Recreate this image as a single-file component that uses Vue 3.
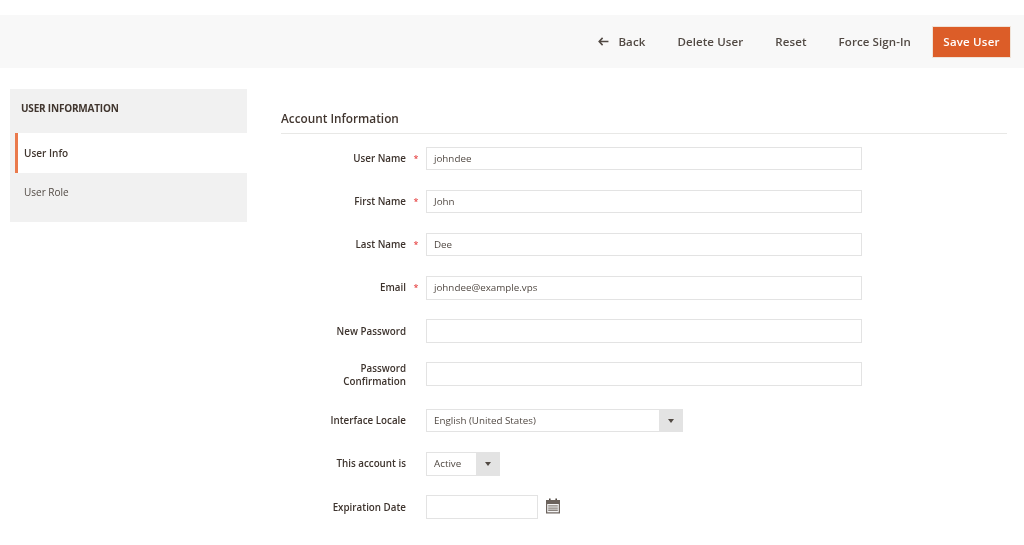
<script setup>
const fields = [
  { label: 'User Name', value: 'johndee', required: true },
  { label: 'First Name', value: 'John', required: true },
  { label: 'Last Name', value: 'Dee', required: true },
  { label: 'Email', value: 'johndee@example.vps', required: true },
  { label: 'New Password', value: '' },
  { label: 'Password Confirmation', value: '', tall: true },
]
</script>

<template>
  <div class="page">
    <header class="actions">
      <a class="action back">
        <svg viewBox="0 0 12 10" width="11" height="9"><path d="M5 1L1.2 5 5 9M1.5 5H11.5" fill="none" stroke="currentColor" stroke-width="1.7"/></svg>
        <span>Back</span>
      </a>
      <a class="action">Delete User</a>
      <a class="action">Reset</a>
      <a class="action">Force Sign-In</a>
      <button class="save">Save User</button>
    </header>

    <div class="content">
      <aside class="side">
        <div class="side-title">USER INFORMATION</div>
        <div class="tab active">User Info</div>
        <div class="tab">User Role</div>
      </aside>

      <main class="main">
        <h2 class="legend">Account Information</h2>

        <div v-for="f in fields" :key="f.label" class="row" :class="{ tall: f.tall }">
          <label class="label">{{ f.label }}</label>
          <span class="mark">{{ f.required ? '*' : '' }}</span>
          <div class="input wide">{{ f.value }}</div>
        </div>

        <div class="row">
          <label class="label">Interface Locale</label>
          <span class="mark"></span>
          <div class="select locale">
            <span class="select-text">English (United States)</span>
            <span class="arrow"></span>
          </div>
        </div>

        <div class="row">
          <label class="label">This account is</label>
          <span class="mark"></span>
          <div class="select status">
            <span class="select-text">Active</span>
            <span class="arrow"></span>
          </div>
        </div>

        <div class="row">
          <label class="label">Expiration Date</label>
          <span class="mark"></span>
          <div class="input date"></div>
          <svg class="cal" viewBox="0 0 16 16" width="16" height="16">
            <path d="M4 0.5h1.6V2H4zM10.4 0.5H12V2h-1.6z" fill="#514943"/>
            <path d="M1 2h14v13.5H1z" fill="#6b625c"/>
            <path d="M2.2 6h11.6v8.3H2.2z" fill="#f4f4f4"/>
            <path d="M3.2 7.2h9.6v1.3H3.2zM3.2 9.4h9.6v1.3H3.2zM3.2 11.6h9.6v1.3H3.2z" fill="#8a837e"/>
          </svg>
        </div>
      </main>
    </div>
  </div>
</template>

<style scoped>
.page {
  width: 1024px;
  height: 545px;
  overflow: hidden;
  padding-top: 15px;
  box-sizing: border-box;
  font-family: "Open Sans", sans-serif;
  font-size: 9.8px;
  color: #41362f;
  background: #fff;
  filter: blur(0.4px);
}

.actions {
  height: 53px;
  background: #f8f8f8;
  display: flex;
  align-items: center;
  justify-content: flex-end;
  padding-right: 13px;
}
.action {
  font-size: 11.5px;
  font-weight: 600;
  color: #514943;
  margin-right: 32px;
  letter-spacing: 0.1px;
}
.back {
  display: flex;
  align-items: center;
  gap: 9px;
}
.save {
  width: 79px;
  height: 32px;
  border: 1px solid #f0e3d8;
  background: #dc5d28;
  color: #fff;
  font-family: inherit;
  font-size: 11.5px;
  font-weight: 600;
  letter-spacing: 0.2px;
  padding: 0;
  margin-left: -11px;
}

.content {
  display: flex;
  padding: 21px 17px 0 10px;
}

.side {
  width: 237px;
  height: 133px;
  background: #f1f1f1;
  flex: none;
}
.side-title {
  height: 37px;
  padding: 0 11px;
  margin-bottom: 7px;
  line-height: 38px;
  font-size: 10px;
  font-weight: 700;
  letter-spacing: -0.2px;
  color: #41362f;
}
.tab {
  height: 40px;
  line-height: 39px;
  padding-left: 14px;
  font-size: 10px;
  color: #514943;
}
.tab.active {
  background: #fff;
  font-weight: 600;
  color: #41362f;
  padding-left: 6px;
  margin-left: 5px;
  border-left: 3px solid #ea7a4c;
  line-height: 40px;
}

.main {
  flex: 1;
  margin-left: 34px;
}
.legend {
  margin: 0 0 12.5px;
  padding: 21px 0 7px;
  height: 16px;
  line-height: 16px;
  font-size: 11.8px;
  font-weight: 600;
  color: #41362f;
  border-bottom: 1px solid #e8e8e6;
}

.row {
  display: flex;
  align-items: center;
  height: 23.5px;
  margin-bottom: 19.7px;
}
.row.tall {
  margin-bottom: 23px;
}
.label {
  width: 125px;
  flex: none;
  box-sizing: border-box;
  text-align: right;
  font-size: 9.8px;
  font-weight: 600;
  line-height: 13px;
  color: #3d332d;
}
.tall .label {
  padding-left: 30px;
  padding-top: 2px;
}
.mark {
  width: 20px;
  flex: none;
  text-align: center;
  font-size: 9px;
  color: #e22626;
}

.input,
.select {
  height: 23.5px;
  box-sizing: border-box;
  border: 1px solid #e3e3e3;
  background: #fff;
  line-height: 21.5px;
  color: #514943;
}
.input {
  padding: 0 7px;
}
.wide {
  width: 436px;
}
.date {
  width: 112px;
}
.cal {
  margin: -2px 0 0 7px;
}

.select {
  display: flex;
  justify-content: space-between;
}
.select-text {
  padding-left: 7px;
}
.locale {
  width: 257px;
}
.status {
  width: 74px;
}
.arrow {
  width: 24px;
  margin: -1px -1px -1px 0;
  background: #e3e3e3;
  position: relative;
}
.arrow::after {
  content: '';
  position: absolute;
  left: 9px;
  top: 10px;
  border-left: 3px solid transparent;
  border-right: 3px solid transparent;
  border-top: 4px solid #514943;
}
</style>
